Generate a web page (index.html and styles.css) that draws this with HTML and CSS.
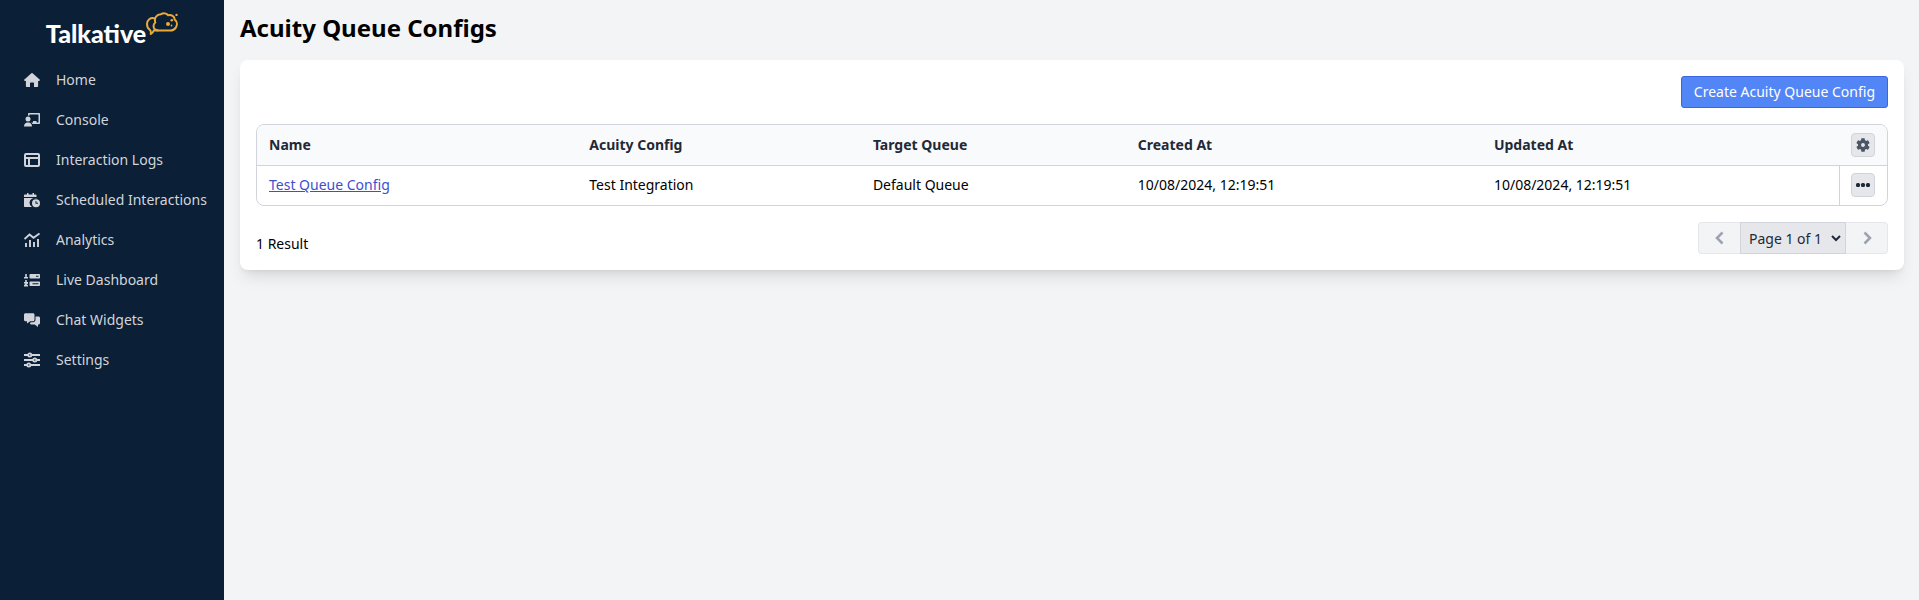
FILE: index.html
```html
<!DOCTYPE html>
<html lang="en">
<head>
  <meta charset="UTF-8">
  <meta name="viewport" content="width=device-width, initial-scale=1.0">
  <title>Acuity Queue Configs</title>
  <link rel="stylesheet" href="styles.css">
</head>
<body>

  <aside class="sidebar">
    <a class="logo" href="#">
      <span class="logo-text">Talkative</span>
      <svg class="logo-cloud" viewBox="0 0 32 24" fill="none" stroke="#eba937" stroke-width="2" stroke-linejoin="round" stroke-linecap="round">
        <path d="M12 18.500C9 18 7.300 16.200 7.600 13.600C7.700 12.300 8.300 11.300 9.300 10.500C7.900 6 10.500 2.400 15 2.200C17.500 0.700 20.700 1.300 22.200 3.300C25.500 2.500 28.500 4.400 28.700 7.500C31.200 9.500 31.500 13 29.800 15.600C28.500 17.600 26.700 18.500 24.300 18.500Z"/>
        <path d="M8.500 6.400C4.500 5.200 1 8 1 12C1 14.500 2.200 16.800 4 18C5 19 5.200 20.300 4.700 22C6.200 21.300 7.200 20.300 7.800 18.500H12"/>
        <circle cx="22" cy="11.900" r="2" fill="#eba937" stroke="none"/>
        <circle cx="25.800" cy="8.200" r="1.300" fill="#eba937" stroke="none"/>
        <circle cx="25.500" cy="13.500" r="0.900" fill="#eba937" stroke="none"/>
        <circle cx="30.500" cy="2.900" r="1.200" fill="#eba937" stroke="none"/>
      </svg>
    </a>

    <nav class="nav">
      <a class="nav-link" href="#">
        <svg viewBox="0 0 16 16" fill="currentColor"><path d="M7.400 1.200a1 1 0 0 1 1.200 0l7 6.200c.7.600.3 1.600-.6 1.600h-.9v5c0 .6-.4 1-1 1H10v-3.500c0-.6-.4-1-1-1H7c-.6 0-1 .4-1 1V15H2.900c-.6 0-1-.4-1-1V9H1C.1 9-.3 8 .4 7.400z"/></svg>
        Home
      </a>
      <a class="nav-link" href="#">
        <svg viewBox="0 0 16 16" fill="currentColor"><path d="M5 1h10c.6 0 1 .4 1 1v9c0 .6-.4 1-1 1H8.500c-.3-.6-.7-1-1.200-1.400H9V9h3.500v1.400h2V2.600h-9v1.200A3 3 0 0 0 4 3.600V2c0-.6.4-1 1-1z"/><circle cx="4" cy="7" r="2.500"/><path d="M0 14.500c0-2.200 1.500-3.900 3.300-3.900h1.400c1.800 0 3.300 1.700 3.300 3.900z"/></svg>
        Console
      </a>
      <a class="nav-link" href="#">
        <svg viewBox="0 0 16 16" fill="currentColor" fill-rule="evenodd"><path d="M2 1h12a2 2 0 0 1 2 2v10a2 2 0 0 1-2 2H2a2 2 0 0 1-2-2V3a2 2 0 0 1 2-2zM2 3v2h12V3zM2 7v6h2V7zM6 7v6h8V7z"/></svg>
        Interaction Logs
      </a>
      <a class="nav-link" href="#">
        <svg viewBox="0 0 16 16" fill="currentColor"><path d="M3 1h1.500v1.500h4V1H10v1.500h1.500c.6 0 1 .4 1 1V5H0V3.500c0-.6.400-1 1-1h2z"/><path d="M0 6h12.500v.4A4.800 4.800 0 0 0 8.200 15H1c-.6 0-1-.4-1-1z"/><path fill-rule="evenodd" d="M12 7.200a4 4 0 1 1 0 8 4 4 0 0 1 0-8zm-.500 1.700v2.800h2.500v-.9h-1.600V8.900z"/></svg>
        Scheduled Interactions
      </a>
      <a class="nav-link" href="#">
        <svg viewBox="0 0 16 16" fill="none" stroke="currentColor" stroke-width="1.900"><path d="M.500 7 5.500 2.500l4 3.200L15.500 1.400"/><path d="M2 15v-4M6 15V8M10 15v-5M14 15V7"/></svg>
        Analytics
      </a>
      <a class="nav-link" href="#">
        <svg viewBox="0 0 16 16" fill="currentColor"><path d="M1.200 2h1.600v3H4v1.500H0V5h1.200zM1.200 8h1.600v2H4v1.500L2.500 13H4v1.500H0v-1.200l1.500-1.800H0V10h1.200z"/><path fill-rule="evenodd" d="M6.500 2H15c.6 0 1 .4 1 1v2.500c0 .600-.4 1-1 1H6.500c-.6 0-1-.4-1-1V3c0-.6.4-1 1-1zm5.500 1.700v1.100h2.500V3.700zM6.500 9.500H15c.6 0 1 .4 1 1V13c0 .600-.4 1-1 1H6.500c-.6 0-1-.4-1-1v-2.500c0-.6.4-1 1-1zm2 1.700v1.100h6v-1.100z"/></svg>
        Live Dashboard
      </a>
      <a class="nav-link" href="#">
        <svg viewBox="0 0 16 16" fill="currentColor"><path d="M1.500 1.200h7.500c.9 0 1.500.6 1.500 1.500v5c0 .9-.6 1.500-1.500 1.500H6.200L3 11.500V9.200H1.500C.6 9.200 0 8.600 0 7.700v-5c0-.9.600-1.500 1.500-1.500z"/><path d="M11.500 4.500h3c.9 0 1.500.6 1.500 1.500v5c0 .9-.6 1.500-1.500 1.500H14V15l-3.300-2.500H7.500c-.9 0-1.500-.6-1.500-1.500l.8-.8H9c1.500 0 2.500-1 2.500-2.500z"/></svg>
        Chat Widgets
      </a>
      <a class="nav-link" href="#">
        <svg viewBox="0 0 16 16" fill="none" stroke="currentColor" stroke-width="1.800"><path d="M0 3h4M7.500 3H16M0 8h9M12.500 8H16M0 13h3M6.500 13H16"/><circle cx="5.800" cy="3" r="1.600"/><circle cx="10.800" cy="8" r="1.600"/><circle cx="4.800" cy="13" r="1.600"/></svg>
        Settings
      </a>
    </nav>
  </aside>

  <main class="content">
    <h1>Acuity Queue Configs</h1>

    <section class="card">
      <div class="toolbar">
        <button type="button" class="btn-primary">Create Acuity Queue Config</button>
      </div>

      <div class="table-wrap">
        <table>
          <colgroup>
            <col class="col-name">
            <col class="col-config">
            <col class="col-queue">
            <col class="col-created">
            <col class="col-updated">
            <col class="col-actions">
          </colgroup>
          <thead>
            <tr>
              <th>Name</th>
              <th>Acuity Config</th>
              <th>Target Queue</th>
              <th>Created At</th>
              <th>Updated At</th>
              <th class="actions">
                <button type="button" class="icon-btn" aria-label="Table settings">
                  <svg viewBox="2 2 20 20" fill="#4b5563"><path d="M19.140 12.940c.04-.3.060-.61.060-.94s-.02-.64-.07-.94l2.030-1.580a.49.490 0 0 0 .12-.61l-1.920-3.320a.49.490 0 0 0-.59-.22l-2.390.96a7 7 0 0 0-1.620-.94l-.36-2.540a.48.480 0 0 0-.48-.41h-3.840a.47.470 0 0 0-.47.410l-.36 2.540c-.59.240-1.130.570-1.620.940l-2.390-.96a.48.480 0 0 0-.59.220L2.740 8.870a.47.470 0 0 0 .12.610l2.030 1.580a6 6 0 0 0 0 1.880l-2.030 1.580a.49.490 0 0 0-.12.610l1.920 3.320c.12.220.370.290.590.220l2.390-.96c.5.380 1.030.700 1.620.940l.36 2.540c.05.240.240.410.480.410h3.840c.24 0 .44-.17.470-.41l.36-2.540a7 7 0 0 0 1.620-.94l2.390.96c.22.080.470 0 .59-.22l1.920-3.320a.47.470 0 0 0-.12-.61zM12 14.800a2.800 2.800 0 1 1 0-5.600 2.800 2.800 0 0 1 0 5.600z"/></svg>
                </button>
              </th>
            </tr>
          </thead>
          <tbody>
            <tr>
              <td><a href="#">Test Queue Config</a></td>
              <td>Test Integration</td>
              <td>Default Queue</td>
              <td>10/08/2024, 12:19:51</td>
              <td>10/08/2024, 12:19:51</td>
              <td class="actions">
                <button type="button" class="icon-btn" aria-label="Row actions">
                  <svg viewBox="0 0 14 14" fill="#1f2937"><rect y="5" width="4" height="4" rx="1.500"/><rect x="5" y="5" width="4" height="4" rx="1.500"/><rect x="10" y="5" width="4" height="4" rx="1.500"/></svg>
                </button>
              </td>
            </tr>
          </tbody>
        </table>
      </div>

      <div class="table-footer">
        <span class="results">1 Result</span>
        <div class="pagination">
          <button type="button" class="page-btn prev" aria-label="Previous page" disabled>
            <svg viewBox="0 0 16 16" fill="none" stroke="currentColor" stroke-width="2.500"><path d="M10.500 2.500 5 8l5.500 5.500"/></svg>
          </button>
          <div class="page-select">
            <select aria-label="Page">
              <option>Page 1 of 1</option>
            </select>
            <svg viewBox="0 0 10 10" fill="none" stroke="#1f2937" stroke-width="2"><path d="M1 3l4 4 4-4"/></svg>
          </div>
          <button type="button" class="page-btn next" aria-label="Next page" disabled>
            <svg viewBox="0 0 16 16" fill="none" stroke="currentColor" stroke-width="2.500"><path d="M5.500 2.500 11 8l-5.500 5.500"/></svg>
          </button>
        </div>
      </div>
    </section>
  </main>

</body>
</html>
```
FILE: styles.css
```css
* {
  box-sizing: border-box;
}

body {
  display: flex;
  min-height: 100vh;
  margin: 0;
  background: #f3f4f6;
  color: #000;
  font-family: "Noto Sans", sans-serif;
  font-size: 14px;
  line-height: 20px;
}

button,
select {
  font: inherit;
}

svg {
  display: block;
  flex: none;
}

/* Sidebar */
.sidebar {
  flex: none;
  width: 224px;
  background: #0b1f36;
}

.logo {
  display: flex;
  justify-content: center;
  height: 60px;
  padding-top: 12px;
  color: #fff;
  text-decoration: none;
}

.logo-text {
  padding-top: 5px;
  font-family: Lato, sans-serif;
  font-size: 25px;
  font-weight: 900;
  line-height: 32px;
}

.logo-cloud {
  width: 32px;
  height: 24px;
}

.nav-link {
  display: flex;
  align-items: center;
  gap: 16px;
  height: 40px;
  padding: 0 24px;
  color: #d1d5db;
  text-decoration: none;
  white-space: nowrap;
}

.nav-link svg {
  width: 16px;
  height: 16px;
}

/* Page */
.content {
  flex: 1;
  min-width: 0;
  padding: 12px 15px 16px 16px;
}

h1 {
  margin: 0 0 16px;
  font-size: 24px;
  font-weight: 700;
  line-height: 32px;
}

.card {
  padding: 16px;
  background: #fff;
  border-radius: 8px;
  box-shadow: 0 10px 15px -3px rgba(0, 0, 0, 0.1), 0 4px 6px -4px rgba(0, 0, 0, 0.1);
}

.toolbar {
  display: flex;
  justify-content: flex-end;
  margin-bottom: 16px;
}

.btn-primary {
  height: 32px;
  padding: 0 12px;
  background: #5285f6;
  border: 1px solid #3b66e0;
  border-radius: 3px;
  color: #fff;
  cursor: pointer;
}

/* Table */
.table-wrap {
  overflow: hidden;
  border: 1px solid #d1d5db;
  border-radius: 8px;
}

table {
  width: 100%;
  table-layout: fixed;
  border-spacing: 0;
}

.col-name { width: 19.65%; }
.col-config { width: 17.4%; }
.col-queue { width: 16.25%; }
.col-created { width: 21.85%; }
.col-actions { width: 48px; }

th,
td {
  padding: 0 12px;
  text-align: left;
}

th {
  height: 41px;
  background: #f9fafb;
  border-bottom: 1px solid #d1d5db;
  color: #1f2937;
  font-weight: 700;
}

td {
  height: 39px;
  padding-bottom: 1px;
}

td a {
  color: #3e4fd0;
}

.actions {
  padding-right: 11px;
  padding-left: 12px;
}

td.actions {
  padding-left: 11px;
  border-left: 1px solid #d1d5db;
}

.icon-btn {
  display: flex;
  align-items: center;
  justify-content: center;
  width: 24px;
  height: 24px;
  padding: 0;
  background: #e5e7eb;
  border: 1px solid #d1d5db;
  border-radius: 4px;
  cursor: pointer;
}

.icon-btn svg {
  width: 14px;
  height: 14px;
}

/* Footer */
.table-footer {
  display: flex;
  justify-content: space-between;
  align-items: flex-end;
  margin-top: 16px;
}

.pagination {
  display: flex;
  height: 32px;
}

.page-btn {
  display: flex;
  align-items: center;
  justify-content: center;
  width: 42px;
  padding: 0;
  background: #f3f4f6;
  border: 1px solid #e5e7eb;
  color: #9ca3af;
}

.page-btn svg {
  width: 16px;
  height: 16px;
}

.prev {
  border-right: 0;
  border-radius: 4px 0 0 4px;
}

.next {
  border-left: 0;
  border-radius: 0 4px 4px 0;
}

.page-select {
  position: relative;
}

.page-select select {
  width: 106px;
  height: 32px;
  padding: 1px 24px 0 8px;
  appearance: none;
  background: #e5e7eb;
  border: 1px solid #d1d5db;
  border-radius: 0;
  color: #1f2937;
}

/* arrow drawn over the select */
.page-select svg {
  position: absolute;
  top: 11px;
  right: 5px;
  width: 10px;
  height: 10px;
  pointer-events: none;
}
```
